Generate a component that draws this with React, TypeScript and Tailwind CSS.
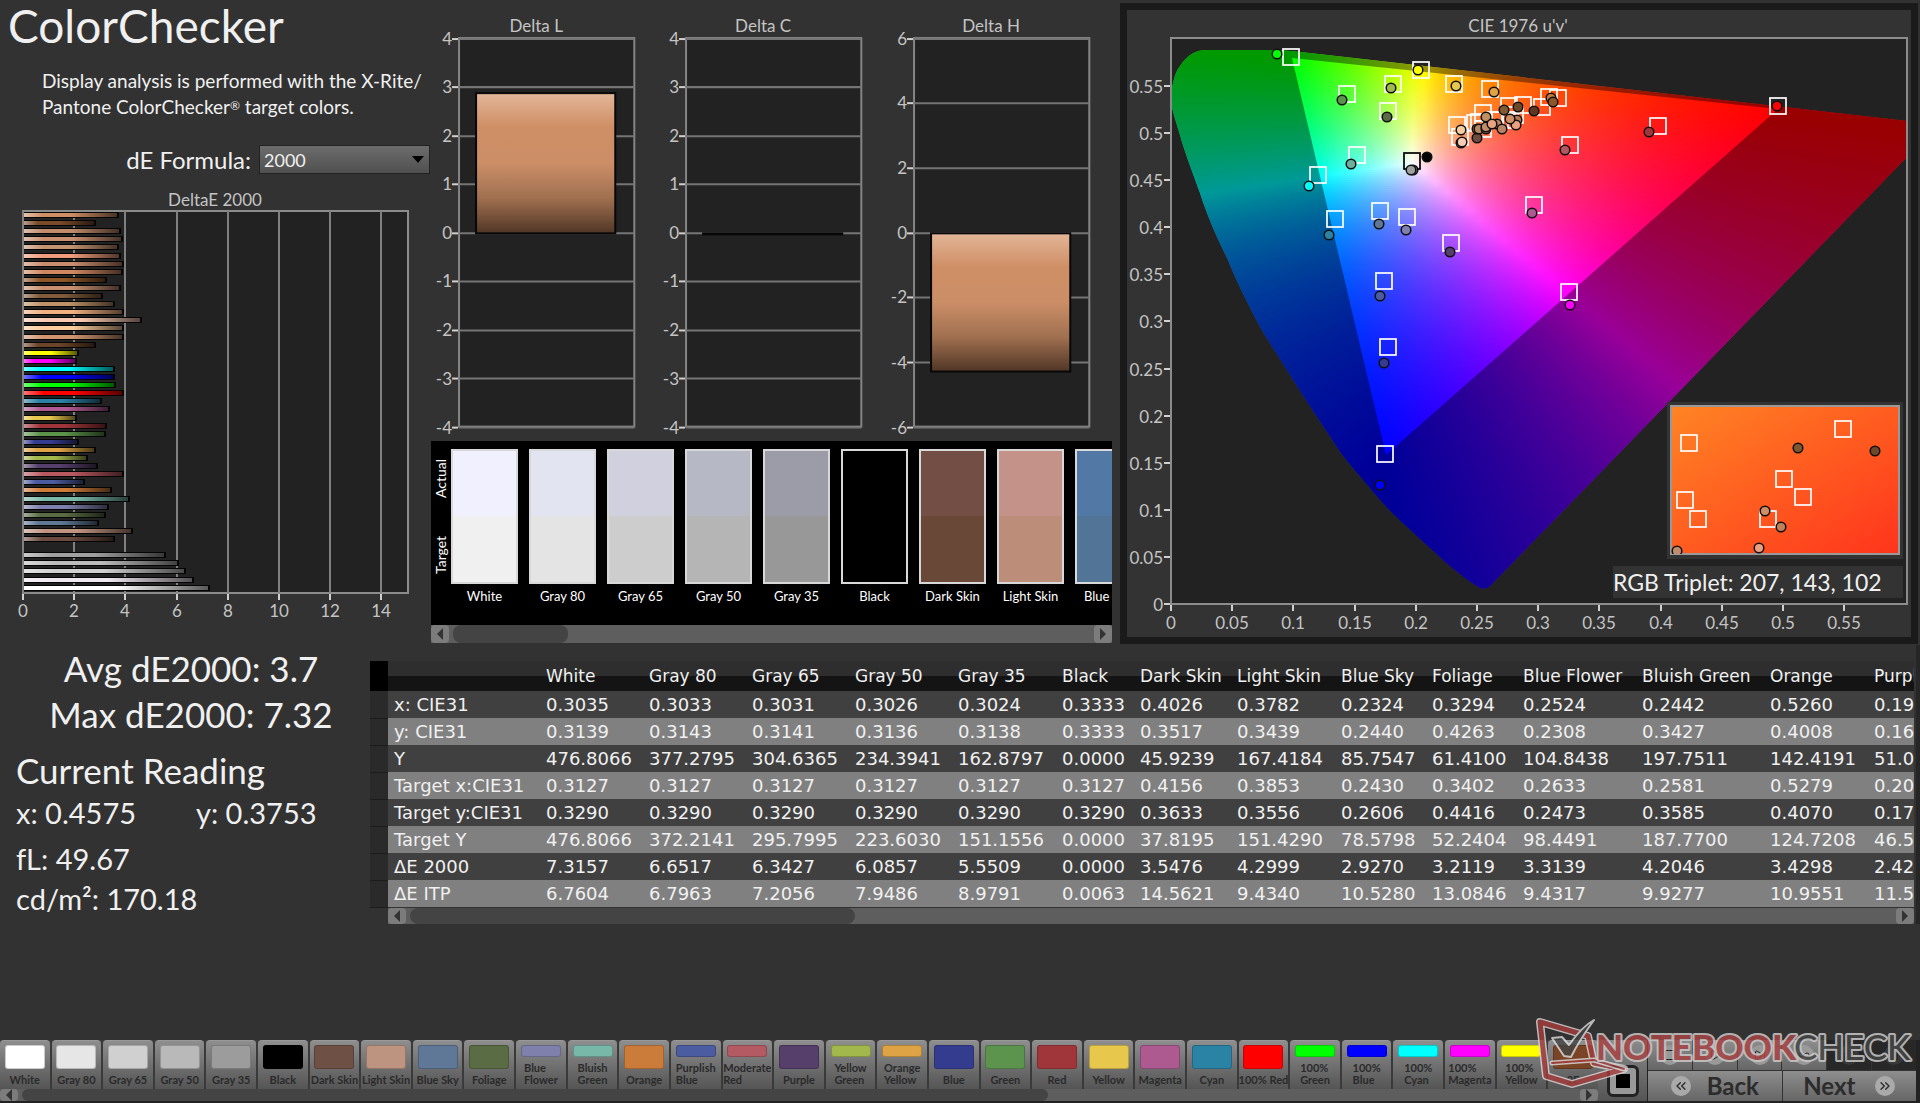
import { useId } from "react";
import { ChevronUp, ChevronsLeft, ChevronsRight, Infinity as Loop, Pause, Play, RefreshCw, SkipForward, Square } from "lucide-react";

const deltaBars: [number, string][] = [
  [3.73, "#cf8f66"], [2.8, "#7a4a2a"], [3.77, "#c08c6c"], [3.85, "#c89070"], [3.73, "#c49470"], [3.77, "#f09c7c"],
  [3.92, "#c88c6e"], [3.85, "#d08860"], [3.23, "#8f5628"], [3.77, "#c8906f"], [3.07, "#805c3c"], [3.55, "#c09468"],
  [3.92, "#f0b080"], [4.6, "#f8c8b0"], [3.92, "#fccc9c"], [3.92, "#d0946f"], [2.8, "#6c4428"], [2.14, "#ffff00"],
  [2.08, "#ff00ff"], [3.54, "#00ffff"], [3.54, "#0000ff"], [3.6, "#00ff00"], [3.92, "#ff0000"], [3.06, "#2a82a5"],
  [3.35, "#b05a92"], [2.08, "#e8c84c"], [3.23, "#a0363a"], [3.2, "#5c944c"], [2.14, "#343c90"], [2.8, "#dda344"],
  [2.5, "#a4b84c"], [2.88, "#563f6c"], [3.92, "#b8585f"], [2.37, "#4c5ca0"], [3.43, "#d07c38"], [4.15, "#78b8a8"],
  [3.31, "#8080b0"], [3.2, "#5a6c44"], [2.92, "#5f7896"], [4.27, "#c09480"], [3.54, "#6c4c40"], [0, "#000000"],
  [5.56, "#a0a0a0"], [6.06, "#bcbcbc"], [6.34, "#d0d0d0"], [6.65, "#f0e8f0"], [7.28, "#ffffff"],
];

const comparison = [
  { name: "White", actual: "#f0f0fe", target: "#f0f0f0" },
  { name: "Gray 80", actual: "#e2e4f1", target: "#e4e4e4" },
  { name: "Gray 65", actual: "#d0d0de", target: "#cdcdcd" },
  { name: "Gray 50", actual: "#b6b8c6", target: "#b5b5b5" },
  { name: "Gray 35", actual: "#9c9ca8", target: "#989898" },
  { name: "Black", actual: "#000000", target: "#000000" },
  { name: "Dark Skin", actual: "#724e44", target: "#6a4838" },
  { name: "Light Skin", actual: "#c49288", target: "#bc8e7a" },
  { name: "Blue Sky", actual: "#5278a6", target: "#527496" },
];

const columns = [
  "White", "Gray 80", "Gray 65", "Gray 50", "Gray 35", "Black", "Dark Skin", "Light Skin", "Blue Sky",
  "Foliage", "Blue Flower", "Bluish Green", "Orange", "Purplish Blue",
];
const columnWidths = [18, 152, 103, 103, 103, 103, 104, 78, 97, 104, 91, 91, 119, 128, 104, 140];

const readings: [string, string[]][] = [
  ["x: CIE31", ["0.3035", "0.3033", "0.3031", "0.3026", "0.3024", "0.3333", "0.4026", "0.3782", "0.2324", "0.3294", "0.2524", "0.2442", "0.5260", "0.1979"]],
  ["y: CIE31", ["0.3139", "0.3143", "0.3141", "0.3136", "0.3138", "0.3333", "0.3517", "0.3439", "0.2440", "0.4263", "0.2308", "0.3427", "0.4008", "0.1660"]],
  ["Y", ["476.8066", "377.2795", "304.6365", "234.3941", "162.8797", "0.0000", "45.9239", "167.4184", "85.7547", "61.4100", "104.8438", "197.7511", "142.4191", "51.0237"]],
  ["Target x:CIE31", ["0.3127", "0.3127", "0.3127", "0.3127", "0.3127", "0.3127", "0.4156", "0.3853", "0.2430", "0.3402", "0.2633", "0.2581", "0.5279", "0.2030"]],
  ["Target y:CIE31", ["0.3290", "0.3290", "0.3290", "0.3290", "0.3290", "0.3290", "0.3633", "0.3556", "0.2606", "0.4416", "0.2473", "0.3585", "0.4070", "0.1790"]],
  ["Target Y", ["476.8066", "372.2141", "295.7995", "223.6030", "151.1556", "0.0000", "37.8195", "151.4290", "78.5798", "52.2404", "98.4491", "187.7700", "124.7208", "46.5210"]],
  ["ΔE 2000", ["7.3157", "6.6517", "6.3427", "6.0857", "5.5509", "0.0000", "3.5476", "4.2999", "2.9270", "3.2119", "3.3139", "4.2046", "3.4298", "2.4200"]],
  ["ΔE ITP", ["6.7604", "6.7963", "7.2056", "7.9486", "8.9791", "0.0063", "14.5621", "9.4340", "10.5280", "13.0846", "9.4317", "9.9277", "10.9551", "11.5400"]],
];

const patches: [string, string][] = [
  ["White", "#ffffff"], ["Gray 80", "#e6e6e6"], ["Gray 65", "#d0d0d0"], ["Gray 50", "#b9b9b9"], ["Gray 35", "#9c9c9c"],
  ["Black", "#000000"], ["Dark Skin", "#6f5044"], ["Light Skin", "#bc9480"], ["Blue Sky", "#607898"], ["Foliage", "#5a6c44"],
  ["Blue\nFlower", "#8080ac"], ["Bluish\nGreen", "#78b8a8"], ["Orange", "#cc7c3a"], ["Purplish\nBlue", "#4c5ca0"],
  ["Moderate\nRed", "#b45a62"], ["Purple", "#563f6a"], ["Yellow\nGreen", "#a2b84c"], ["Orange\nYellow", "#dda344"],
  ["Blue", "#343c90"], ["Green", "#5c944e"], ["Red", "#a0363a"], ["Yellow", "#e8c84c"], ["Magenta", "#ac5a90"],
  ["Cyan", "#2a82a5"], ["100% Red", "#ff0000"], ["100%\nGreen", "#00ff00"], ["100%\nBlue", "#0000ff"],
  ["100%\nCyan", "#00ffff"], ["100%\nMagenta", "#ff00ff"], ["100%\nYellow", "#ffff00"], ["2E", "#7a4526"],
];

function DeltaEChart() {
  const x0 = 23;
  const unit = 25.6;
  return (
    <svg viewBox="0 188 430 436" className="mt-3.5 block w-full" role="img" aria-label="DeltaE 2000">
      <defs>
        <linearGradient id="barShade">
          <stop offset="0" stopColor="#fff" stopOpacity="0.45" />
          <stop offset="0.2" stopColor="#fff" stopOpacity="0" />
          <stop offset="0.5" stopColor="#000" stopOpacity="0" />
          <stop offset="1" stopColor="#000" stopOpacity="0.65" />
        </linearGradient>
      </defs>
      <text x="215" y="206" textAnchor="middle" fontSize="17" fill="#c4c4c4">DeltaE 2000</text>
      <rect x={x0} y="211" width="385" height="382" fill="#222" stroke="#8c8c8c" strokeWidth="2" />
      {[0, 2, 4, 6, 8, 10, 12, 14].map((n) => {
        const x = Math.round(x0 + n * unit);
        return (
          <g key={n}>
            <path d={`M${x} 211V593`} stroke="#808080" strokeWidth="2" />
            <path d={`M${x} 594V600`} stroke="#d0d0d0" strokeWidth="2" />
            <text x={x} y="617" textAnchor="middle" fontSize="17" fill="#c4c4c4">{n}</text>
          </g>
        );
      })}
      {deltaBars.map(([value, color], i) => {
        if (!value) return null;
        const y = Math.round(212 + i * 8.1);
        const width = Math.round(value * unit);
        return (
          <g key={i}>
            <rect x={x0 + 1} y={y} width={width} height="6" fill="#050505" />
            <rect x={x0 + 1} y={y + 1} width={width - 2} height="4" fill={color} />
            <rect x={x0 + 1} y={y + 1} width={width - 2} height="4" fill="url(#barShade)" />
          </g>
        );
      })}
    </svg>
  );
}

function DeltaChart({ title, max, step, value }: { title: string; max: number; step: number; value: number }) {
  const shade = useId();
  const y = (n: number) => Math.round(232.5 - (n / max) * 194);
  const ticks: number[] = [];
  for (let n = max; n >= -max; n -= step) ticks.push(n);
  const top = y(Math.max(value, 0));
  const height = Math.max(y(Math.min(value, 0)) - top, 1);
  return (
    <svg viewBox="0 0 227 436" className="block w-full" role="img" aria-label={title}>
      <defs>
        <linearGradient id={shade} x1="0" y1="0" x2="0" y2="1">
          <stop offset="0" stopColor="#e3b699" />
          <stop offset="0.24" stopColor="#cf8f66" />
          <stop offset="0.5" stopColor="#cb8e67" />
          <stop offset="0.75" stopColor="#a07050" />
          <stop offset="1" stopColor="#503626" />
        </linearGradient>
      </defs>
      <text x="106" y="32" textAnchor="middle" fontSize="17" fill="#c4c4c4">{title}</text>
      <rect x="29" y="38" width="175" height="388" fill="#222" stroke="#858585" strokeWidth="2" />
      {ticks.map((n) => (
        <g key={n}>
          <path d={`M29 ${y(n)}H204`} stroke="#757575" strokeWidth="2" />
          <path d={`M22 ${y(n)}H28`} stroke="#d0d0d0" strokeWidth="2" />
          <text x="22" y={y(n) + 6} textAnchor="end" fontSize="17" fill="#c4c4c4">{n}</text>
        </g>
      ))}
      <rect x="46" y={top} width="139" height={height} fill={`url(#${shade})`} stroke="#080808" strokeWidth="2" />
    </svg>
  );
}

const plot = { left: 1171, right: 1907, top: 38, bottom: 604, perU: 1224, perV: 942 };

// u'v' -> display RGB with P3 primaries, scaled so the strongest channel is full
function chromaticityColor(px: number, py: number) {
  const u = (px - plot.left) / plot.perU;
  const v = (plot.bottom - py) / plot.perV;
  const d = 6 * u - 16 * v + 12;
  const x = (9 * u) / d;
  const y = (4 * v) / d;
  const z = 1 - x - y;
  const rgb = [
    2.4935 * x - 0.9314 * y - 0.4027 * z,
    -0.8295 * x + 1.7627 * y + 0.0236 * z,
    0.0358 * x - 0.0762 * y + 0.9569 * z,
  ].map((c) => Math.max(c, 0));
  const peak = Math.max(...rgb, 0.0001);
  return `rgb(${rgb.map((c) => Math.round((c / peak) * 255)).join(",")})`;
}

const gamutRows = Array.from({ length: 283 }, (_, i) => 38 + i * 2);
const gamutStops = Array.from({ length: 65 }, (_, i) => i / 64);

const locus =
  "M1171 97C1172 84 1175 72 1180 66C1188 54 1196 50 1207 50L1278 50Q1292 51 1310 53L1907 121V157L1491 585Q1487 590 1480 588C1470 582 1458 573 1443 560C1420 538 1400 522 1382 502C1365 482 1350 465 1341 453C1322 424 1303 396 1292 378C1278 355 1266 338 1258 323C1246 300 1235 278 1228 260C1215 234 1206 212 1200 193C1190 165 1184 150 1180 135C1175 118 1171 108 1171 97Z";
const triangle = "M1292 58L1778 109L1386 455Z";

const targets: [number, number][] = [
  [1291, 57], [1421, 70], [1454, 84], [1490, 89], [1393, 84], [1347, 94], [1388, 111], [1357, 155], [1318, 175],
  [1335, 219], [1380, 211], [1407, 217], [1451, 243], [1384, 281], [1534, 205], [1569, 292], [1570, 145], [1658, 126],
  [1778, 106], [1549, 97], [1558, 98], [1542, 107], [1523, 105], [1509, 106], [1483, 113], [1457, 125], [1460, 137],
  [1475, 123], [1479, 122], [1495, 120], [1500, 120], [1515, 115], [1510, 120], [1483, 129], [1388, 347], [1385, 454],
];

const measured: [number, number, string][] = [
  [1277, 54, "#00ff00"], [1418, 70, "#ffff00"], [1456, 86, "#e3c84c"], [1494, 92, "#dda344"], [1391, 88, "#a0b84c"],
  [1342, 100, "#5c944c"], [1387, 117, "#5a6c44"], [1351, 164, "#6cb0a0"], [1309, 186, "#00ffff"], [1329, 235, "#2a82a5"],
  [1379, 224, "#5f7896"], [1406, 230, "#8080b0"], [1450, 252, "#563f6c"], [1380, 296, "#4c5ca0"], [1532, 213, "#ac5a92"],
  [1570, 305, "#ff00ff"], [1565, 150, "#b0585f"], [1649, 132, "#a0363a"], [1777, 106, "#ff0000"], [1384, 363, "#343c90"],
  [1380, 485, "#0000ff"], [1427, 157, "#000000"], [1413, 170, "#707070"], [1411, 170, "#a0a0a0"], [1551, 98, "#c87a38"],
  [1553, 102, "#8f5628"], [1534, 111, "#5c3822"], [1518, 107, "#6c4828"], [1504, 110, "#805c34"], [1461, 143, "#d8a890"],
  [1462, 142, "#f8ccb4"], [1461, 130, "#f8cc9c"], [1477, 138, "#6c4c40"], [1477, 129, "#8c6448"], [1479, 129, "#b88860"],
  [1486, 129, "#a87454"], [1486, 127, "#c08c6c"], [1486, 117, "#c09060"], [1497, 124, "#c08460"], [1492, 124, "#e8a480"],
  [1502, 129, "#b88468"], [1517, 120, "#b87850"], [1516, 125, "#e8a080"], [1510, 119, "#cf8f66"],
];

const insetTargets: [number, number][] = [[1689, 443], [1843, 429], [1784, 479], [1803, 497], [1685, 500], [1698, 519], [1768, 519]];
const insetMeasured: [number, number, string][] = [
  [1798, 448, "#7a5830"], [1875, 451, "#6c4828"], [1765, 511, "#cf8f66"], [1781, 527, "#c08058"], [1759, 548, "#e8a080"], [1677, 551, "#c08c6c"],
];

function Target({ x, y, color = "#fff" }: { x: number; y: number; color?: string }) {
  return <rect x={x - 8} y={y - 8} width="16" height="16" fill="none" stroke={color} strokeWidth="1.7" />;
}

function Reading({ x, y, color }: { x: number; y: number; color: string }) {
  return <circle cx={x} cy={y} r="4.8" fill={color} stroke="#101010" strokeWidth="1.5" />;
}

function ChromaticityChart() {
  const steps = Array.from({ length: 12 }, (_, i) => i);
  return (
    <svg viewBox="1127 10 784 627" className="block w-full" role="img" aria-label="CIE 1976 u'v'">
      <defs>
        <clipPath id="locus"><path d={locus} /></clipPath>
        <clipPath id="inset"><rect x="1671" y="406" width="228" height="148" /></clipPath>
        <linearGradient id="insetFill" x1="0" y1="0" x2="1" y2="1">
          <stop offset="0" stopColor="#ff8424" />
          <stop offset="0.5" stopColor="#ff5c20" />
          <stop offset="1" stopColor="#ff341c" />
        </linearGradient>
        {gamutRows.map((y) => (
          <linearGradient key={y} id={`row${y}`}>
            {gamutStops.map((t) => (
              <stop key={t} offset={t} stopColor={chromaticityColor(plot.left + t * 736, y + 1)} />
            ))}
          </linearGradient>
        ))}
      </defs>
      <text x="1518" y="32" textAnchor="middle" fontSize="17" fill="#c4c4c4">CIE 1976 u'v'</text>
      <rect x="1171" y="38" width="736" height="566" fill="#222" />
      <g clipPath="url(#locus)">
        {gamutRows.map((y) => (
          <rect key={y} x="1171" y={y} width="736" height="2" fill={`url(#row${y})`} shapeRendering="crispEdges" />
        ))}
        <path d={`${locus}${triangle}`} fillRule="evenodd" fillOpacity="0.4" />
      </g>
      <rect x="1171" y="38" width="736" height="566" fill="none" stroke="#8c8c8c" strokeWidth="2" />
      {steps.map((n) => {
        const x = Math.round(1171 + n * 61.2);
        const y = Math.round(604 - n * 47.1);
        const label = String(n * 5 / 100);
        return (
          <g key={n} fontSize="17" fill="#c4c4c4">
            <path d={`M${x} 605V611M1164 ${y}H1170`} stroke="#d0d0d0" strokeWidth="2" />
            <text x={x} y="629" textAnchor="middle">{label}</text>
            <text x="1163" y={y + 7} textAnchor="end">{label}</text>
          </g>
        );
      })}
      {targets.map(([x, y], i) => <Target key={i} x={x} y={y} />)}
      <Target x={1412} y={161} color="#000" />
      {measured.map(([x, y, color], i) => <Reading key={i} x={x} y={y} color={color} />)}

      <rect x="1667" y="402" width="236" height="157" fill="#333" />
      <rect x="1671" y="406" width="228" height="148" fill="url(#insetFill)" stroke="#999" strokeWidth="2" />
      <g clipPath="url(#inset)">
        {insetTargets.map(([x, y], i) => <Target key={i} x={x} y={y} />)}
        {insetMeasured.map(([x, y, color], i) => <Reading key={i} x={x} y={y} color={color} />)}
      </g>
      <rect x="1613" y="566" width="290" height="32" fill="#333" />
      <text x="1613" y="591" fontSize="23" fill="#f0f0f0">RGB Triplet: 207, 143, 102</text>
    </svg>
  );
}

function ScrollBar({ label, thumb, className }: { label: string; thumb: string; className: string }) {
  return (
    <div role="group" aria-label={label} className={`flex gap-1 bg-[#5e5e5e] ${className}`}>
      <button aria-label="Scroll left" className="flex w-[18px] shrink-0 items-center justify-center rounded-sm bg-[#7c7c7c]">
        <svg viewBox="0 0 8 12" className="h-3 w-2"><path d="M7 0V12L1 6Z" fill="#333" /></svg>
      </button>
      <div className="min-w-0 flex-1">
        <div className={`h-full rounded-lg bg-[#444] ${thumb}`} />
      </div>
      <button aria-label="Scroll right" className="flex w-[18px] shrink-0 items-center justify-center rounded-sm bg-[#7c7c7c]">
        <svg viewBox="0 0 8 12" className="h-3 w-2"><path d="M1 0V12L7 6Z" fill="#333" /></svg>
      </button>
    </div>
  );
}

function Comparison() {
  return (
    <section className="mt-1 ml-px overflow-hidden">
      <div className="flex h-[184px] overflow-hidden bg-black pt-2 text-white">
        <div className="flex h-[135px] w-5 shrink-0 rotate-180 items-center justify-between pt-2.5 pb-2.5 text-sm leading-5 [writing-mode:vertical-rl]">
          <span>Target</span>
          <span>Actual</span>
        </div>
        <div className="flex min-w-0 gap-[11px] overflow-hidden">
          {comparison.map((c) => (
            <figure key={c.name} className="w-[67px] shrink-0">
              <div className="h-[135px] border-2 border-[#d8d8d8]">
                <div className="h-1/2" style={{ background: c.actual }} />
                <div className="h-1/2" style={{ background: c.target }} />
              </div>
              <figcaption className="mt-1 text-center text-[13px] leading-4 whitespace-nowrap">{c.name}</figcaption>
            </figure>
          ))}
        </div>
      </div>
      <ScrollBar label="Comparison scroll" thumb="w-[18%]" className="h-[18px]" />
    </section>
  );
}

function ReadingsTable() {
  return (
    <section className="mt-4 mr-0.5 min-w-0 flex-1 overflow-hidden">
      <table className="w-[1638px] table-fixed border-collapse text-left font-['DejaVu_Sans',sans-serif] text-lg leading-5 text-[#f0f0f0]">
        <colgroup>
          {columnWidths.map((w, i) => <col key={i} style={{ width: w }} />)}
        </colgroup>
        <thead>
          <tr className="h-[30px] bg-linear-to-b from-[#2e2e2e] from-50% to-[#141414] to-50%">
            <td className="bg-black" />
            <td />
            {columns.map((c) => <th key={c} scope="col" className="p-0 pl-1.5 text-[17px] font-normal whitespace-nowrap">{c}</th>)}
          </tr>
        </thead>
        <tbody>
          {readings.map(([label, values]) => (
            <tr key={label} className="h-[27px] bg-[#404040] even:bg-[#808080]">
              <td className="border-b border-[#1c1c1c] bg-[#2a2a2a]" />
              <th scope="row" className="p-0 pl-1.5 font-normal whitespace-nowrap">{label}</th>
              {values.map((v, i) => <td key={i} className="p-0 pl-1.5">{v}</td>)}
            </tr>
          ))}
        </tbody>
      </table>
      <ScrollBar label="Table scroll" thumb="w-[30%]" className="ml-[18px] h-4" />
    </section>
  );
}

function Watermark() {
  return (
    <svg viewBox="0 0 390 80" className="pointer-events-none absolute right-0 bottom-2 h-20 w-[390px]" aria-label="Notebookcheck">
      <g opacity="0.8" strokeLinejoin="round" strokeLinecap="round" fill="none">
        <path d="M10 9L58 23L64 50L94 56L42 71L16 63Z" stroke="#ddd" strokeWidth="8" />
        <path d="M10 9L58 23L64 50L94 56L42 71L16 63Z" stroke="#a83c3c" strokeWidth="5" />
        <path d="M22 50L64 47L94 56" stroke="#ddd" strokeWidth="5" />
        <path d="M22 50L64 47L94 56" stroke="#a83c3c" strokeWidth="2" />
        <path d="M22 25L32 24L39 32C46 22 55 12 64 7C56 18 47 32 41 44L34 43Z" fill="#444" stroke="#ddd" strokeWidth="2" />
      </g>
      <g fontSize="35" strokeLinejoin="round" paintOrder="stroke" stroke="#c8c8c8" strokeWidth="4" opacity="0.85">
        <text x="66" y="47" fontWeight="900" fill="#a84444">NOTEBOOK</text>
        <text x="264" y="47" fontWeight="500" fill="#444">CHECK</text>
      </g>
    </svg>
  );
}

function PatchBar() {
  const controls = [
    { label: "Stop", Icon: Square }, { label: "Play", Icon: Play }, { label: "Step", Icon: SkipForward },
    { label: "Loop", Icon: Loop }, { label: "Refresh", Icon: RefreshCw }, { label: "Pause", Icon: Pause },
  ];
  return (
    <footer className="relative mt-auto flex h-[63px] border-b-2 border-[#222] bg-[#3a3a3a]">
      <div className="flex min-w-0 flex-1 flex-col">
        <div className="flex flex-1 gap-0.5">
          {patches.map(([name, color]) => {
            const twoLines = name.includes("\n");
            return (
              <button
                key={name}
                className="flex min-w-0 flex-1 flex-col items-center justify-between rounded-t border-t border-[#999] bg-linear-to-b from-[#8e8e8e] to-[#555] pt-1 pb-[3px]"
              >
                <span
                  className={`w-10 rounded-[3px] border border-black/20 ${twoLines ? "h-3" : "h-6"}`}
                  style={{ background: color }}
                />
                <span className="text-left text-[11px] leading-3 font-bold whitespace-pre text-[#2a2a2a]">{name}</span>
              </button>
            );
          })}
        </div>
        <ScrollBar label="Patch scroll" thumb="w-[66%]" className="h-3" />
      </div>
      <div className="flex w-[49px] flex-col items-center justify-between bg-linear-to-b from-[#8a8a8a] to-[#555] py-1">
        <button aria-label="Expand"><ChevronUp size={16} color="#333" /></button>
        <button aria-label="Stop" className="flex size-8 items-center justify-center rounded-md border-3 border-[#222] bg-[#999]">
          <span className="size-3.5 bg-black" />
        </button>
      </div>
      <div className="flex w-[273px] flex-col gap-px border-r-4 border-l border-[#222] bg-[#333]">
        <div className="flex h-[30px] gap-px">
          {controls.map(({ label, Icon }, i) => (
            <button
              key={label}
              aria-label={label}
              className={`flex flex-1 items-center justify-center ${i < 4 ? "bg-linear-to-b from-[#8e8e8e] to-[#666]" : "bg-[#282828]"}`}
            >
              <span className={`flex size-5 items-center justify-center rounded-full ${i < 4 ? "bg-[#999]" : "bg-[#383838]"}`}>
                <Icon size={12} color="#222" />
              </span>
            </button>
          ))}
        </div>
        <div className="flex flex-1 gap-px text-2xl leading-7 font-bold text-[#2c2c2c]">
          <button className="flex flex-1 items-center justify-center gap-4 bg-linear-to-b from-[#8e8e8e] to-[#666]">
            <span className="flex size-5 items-center justify-center rounded-full bg-[#aaa]"><ChevronsLeft size={16} /></span>
            Back
          </button>
          <button className="flex flex-1 items-center justify-center gap-5 bg-linear-to-b from-[#8e8e8e] to-[#666]">
            Next
            <span className="flex size-5 items-center justify-center rounded-full bg-[#aaa]"><ChevronsRight size={16} /></span>
          </button>
        </div>
      </div>
      <Watermark />
    </footer>
  );
}

export default function App() {
  return (
    <div className="flex min-h-screen flex-col bg-[#323232] font-[Lato,sans-serif] text-[#f0f0f0]">
      <main className="grid grid-cols-[minmax(0,430fr)_minmax(0,690fr)_minmax(0,800fr)]">
        <section>
          <h1 className="pl-2 text-[46px] leading-[52px]">ColorChecker</h1>
          <p className="pt-4 pl-[42px] text-[19px] leading-[26px] whitespace-nowrap">
            Display analysis is performed with the X-Rite/
            <br />
            Pantone ColorChecker<span className="align-[4px] text-xs leading-3">®</span> target colors.
          </p>
          <div className="mt-[25px] flex h-[29px] items-center justify-end gap-2">
            <label htmlFor="formula" className="text-2xl leading-7">dE Formula:</label>
            <div className="relative w-[171px]">
              <select
                id="formula"
                className="h-[29px] w-full appearance-none border border-[#222] bg-linear-to-b from-[#6c6c6c] to-[#505050] pl-1 text-lg leading-6"
              >
                <option>2000</option>
              </select>
              <svg viewBox="0 0 12 7" className="pointer-events-none absolute top-[11px] right-1.5 h-[7px] w-3"><path d="M0 0H12L6 7Z" /></svg>
            </div>
          </div>
          <DeltaEChart />
        </section>
        <section className="mr-2">
          <div className="grid grid-cols-3">
            <DeltaChart title="Delta L" max={4} step={1} value={2.88} />
            <DeltaChart title="Delta C" max={4} step={1} value={0} />
            <DeltaChart title="Delta H" max={6} step={2} value={-4.28} />
          </div>
          <Comparison />
        </section>
        <section className="mt-[3px] mr-0.5 self-start border-7 border-[#1a1a1a] bg-[#333]">
          <ChromaticityChart />
        </section>
      </main>

      <div className="mt-px flex border-r-4 border-[#262626]">
        <section className="w-[370px] shrink-0 text-[29px] leading-10">
          <div className="pl-3 text-center text-[35px] leading-[46px]">
            <p>Avg dE2000: 3.7</p>
            <p>Max dE2000: 7.32</p>
          </div>
          <h2 className="mt-2.5 pl-4 text-[35px] leading-[46px]">Current Reading</h2>
          <div className="flex pl-4">
            <p className="w-[180px]">x: 0.4575</p>
            <p>y: 0.3753</p>
          </div>
          <p className="mt-1.5 pl-4">fL: 49.67</p>
          <p className="pl-4">cd/m²: 170.18</p>
        </section>
        <ReadingsTable />
      </div>

      <PatchBar />
    </div>
  );
}
